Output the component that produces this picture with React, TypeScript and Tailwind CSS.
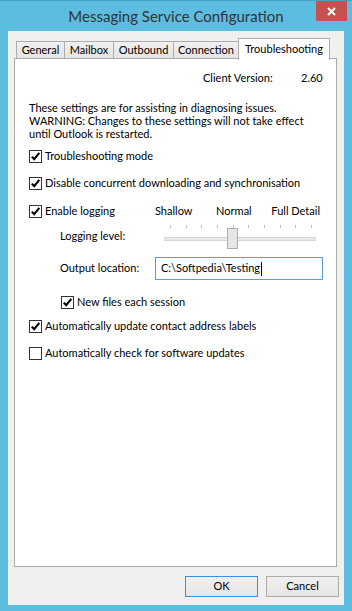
import React from "react";

function Check({ checked }: { checked: boolean }) {
  return (
    <span className="w-[13px] h-[13px] border border-[#333333] bg-white flex items-center justify-center shrink-0">
      {checked && (
        <svg width="11" height="11" viewBox="0 0 11 11">
          <path d="M1.8 5.6 L4.2 8.2 L9.3 1.8" fill="none" stroke="#000" strokeWidth="2.1" />
        </svg>
      )}
    </span>
  );
}

function CheckRow({ checked, label, className = "" }: { checked: boolean; label: string; className?: string }) {
  return (
    <div className={`flex items-center h-4 gap-[3px] ${className}`}>
      <Check checked={checked} />
      <span className="whitespace-nowrap">{label}</span>
    </div>
  );
}

function Tab({ label, w }: { label: string; w: string }) {
  return (
    <div
      className={`${w} h-[17px] mt-[3px] border border-[#acacac] border-b-0 -ml-px first:ml-0 bg-gradient-to-b from-[#f0f0f0] to-[#e5e5e5] flex items-center justify-center whitespace-nowrap`}
    >
      {label}
    </div>
  );
}

export default function App() {
  const ticks = [0, 1, 2, 3, 4, 5, 6, 7, 8, 9];
  return (
    <div
      className="w-[352px] h-[611px] bg-[#5dbde1] flex flex-col text-black text-[11px] overflow-hidden"
      style={{ fontFamily: "Lato, 'Liberation Sans', sans-serif" }}
    >
      {/* Title bar */}
      <div className="h-[31px] shrink-0 relative border-t border-[#4a9fc6] flex items-center justify-center">
        <span className="text-[15px] text-[#333] mt-[1px]">Messaging Service Configuration</span>
        <div className="absolute right-[5px] top-0 w-[31px] h-[20px] bg-[#c75050] flex items-center justify-center">
          <svg width="9" height="9" viewBox="0 0 9 9">
            <path d="M1 1 L8 8 M8 1 L1 8" stroke="#fff" strokeWidth="2" />
          </svg>
        </div>
      </div>

      {/* Client area */}
      <div className="mx-[8px] h-[574px] bg-[#f0f0f0] flex flex-col pl-[6px] pr-[7px] pt-[7px]">
        {/* Tabs */}
        <div className="flex items-end h-[20px] pl-[2px] relative z-10">
          <Tab label="General" w="w-[49px]" />
          <Tab label="Mailbox" w="w-[50px]" />
          <Tab label="Outbound" w="w-[61px]" />
          <Tab label="Connection" w="w-[66px]" />
          <div className="w-[92px] h-[22px] -ml-px mb-[-2px] bg-white border border-[#acacac] border-b-0 flex items-start justify-center pt-[2px] whitespace-nowrap">
            Troubleshooting
          </div>
        </div>

        {/* Panel */}
        <div className="h-[509px] bg-white border border-[#acacac] flex flex-col pl-[14px]">
          <div className="flex h-4 mt-[11px] items-center whitespace-nowrap">
            <span className="ml-[174px] w-[98px]">Client Version:</span>
            <span>2.60</span>
          </div>

          <div className="mt-[15px] leading-[13px] whitespace-nowrap">
            <div>These settings are for assisting in diagnosing issues.</div>
            <div>WARNING: Changes to these settings will not take effect</div>
            <div>until Outlook is restarted.</div>
          </div>

          <CheckRow checked label="Troubleshooting mode" className="mt-[8px]" />
          <CheckRow checked label="Disable concurrent downloading and synchronisation" className="mt-[11px]" />

          <div className="flex mt-[12px]">
            <div className="w-[126px] flex flex-col">
              <CheckRow checked label="Enable logging" />
              <div className="pl-[31px] mt-[9px] h-4 flex items-center whitespace-nowrap">Logging level:</div>
            </div>
            <div className="w-[167px] flex flex-col">
              <div className="h-4 flex items-center justify-between pr-[2px] whitespace-nowrap">
                <span>Shallow</span>
                <span className="ml-[4px]">Normal</span>
                <span>Full Detail</span>
              </div>
              <div className="relative h-[30px]">
                <div className="absolute left-[15px] w-[142px] top-[6px] h-[3px] flex justify-between">
                  {ticks.map((t) => (
                    <span key={t} className="w-px h-[3px] bg-[#bfbfbf]" />
                  ))}
                </div>
                <div className="absolute left-[9px] w-[152px] top-[18px] h-[4px] bg-[#e7eaea] border border-[#d6d6d6]" />
                <div className="absolute left-[72px] top-[9px] w-[11px] h-[21px] bg-[#e6e6e6] border border-[#acacac]" />
              </div>
            </div>
          </div>

          <div className="flex mt-[8px] items-center">
            <div className="w-[126px] pl-[31px] whitespace-nowrap">Output location:</div>
            <div className="w-[168px] h-[23px] border border-[#569de5] bg-white flex items-center pl-[5px] whitespace-nowrap">
              <span>C:\Softpedia\Testing</span>
              <span className="w-px h-[14px] bg-black ml-[1px]" />
            </div>
          </div>

          <CheckRow checked label="New files each session" className="mt-[14px] ml-[32px]" />
          <CheckRow checked label="Automatically update contact address labels" className="mt-[8px]" />
          <CheckRow checked={false} label="Automatically check for software updates" className="mt-[11px]" />
        </div>

        {/* Buttons */}
        <div className="flex justify-end gap-[8px] mt-[9px] mr-[-2px]">
          <div className="w-[73px] h-[21px] border border-[#3c8ee5] bg-gradient-to-b from-[#f0f0f0] to-[#e5e5e5] flex items-center justify-center">
            OK
          </div>
          <div className="w-[73px] h-[21px] border border-[#acacac] bg-gradient-to-b from-[#f0f0f0] to-[#e5e5e5] flex items-center justify-center">
            Cancel
          </div>
        </div>
      </div>
    </div>
  );
}
